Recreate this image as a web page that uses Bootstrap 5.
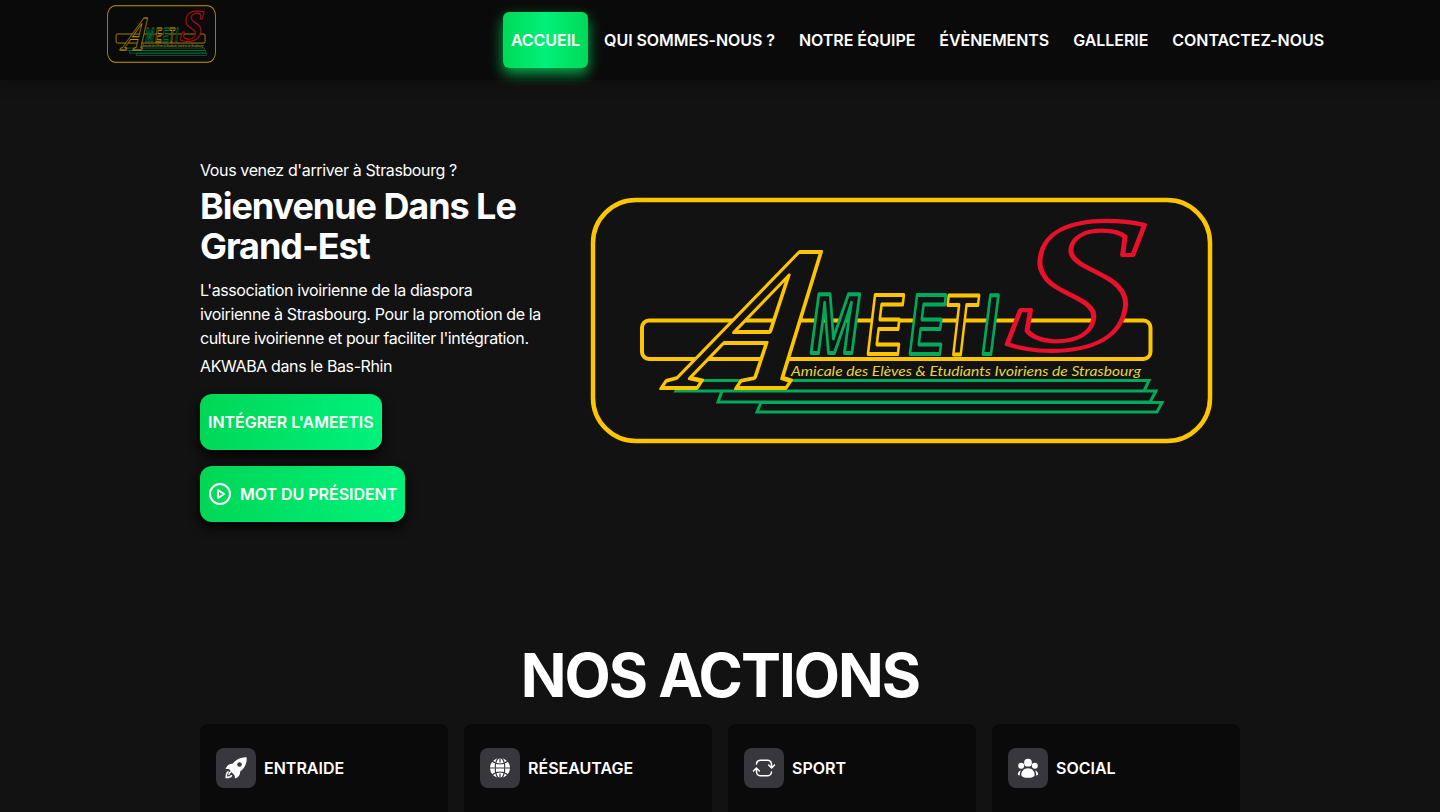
<!DOCTYPE html>
<html lang="fr">
<head>
<meta charset="utf-8">
<meta name="viewport" content="width=device-width, initial-scale=1">
<title>AMEETIS</title>
<link href="https://cdn.jsdelivr.net/npm/bootstrap@5.3.0/dist/css/bootstrap.min.css" rel="stylesheet">
<style>
body{background:#121212;color:#fff;font-family:Inter,sans-serif;font-size:16px;line-height:24px;overflow-x:hidden}
.site-nav{height:80px;background:#0a0a0a;box-shadow:0 4px 12px rgba(10,10,10,.35);padding:0 108px 0 107px;--logo-bg:#0a0a0a}
.brand-logo{width:109px;height:58px;margin-top:5px;opacity:.76}
.nav-item-link{height:56px;padding:0 8px;color:#fff;font-weight:600;letter-spacing:-.05px;text-decoration:none;border-radius:6px;white-space:nowrap}
.nav-item-link.active{background:linear-gradient(90deg,#00d957,#00f07a 50%,#00d957);box-shadow:0 6px 14px rgba(0,225,100,.75)}
.page-width{width:1040px}
.hero{padding-top:78px;height:570px;--logo-bg:#121212}
.hero-copy{width:345px}
.hero-copy p{letter-spacing:-.38px}
.hero-title{font-size:36px;line-height:40px;font-weight:700;letter-spacing:-1.06px;margin:4px 0 12px}
.hero-logo{width:623px;height:247px;margin:39px 0 0 45px}
.cta{height:56px;padding:0 8px;border-radius:12px;color:#fff;font-weight:600;letter-spacing:-.03px;text-decoration:none;background:linear-gradient(100deg,#00d655,#00f27d);box-shadow:0 5px 12px #000}
.section-title{font-size:60px;line-height:60px;font-weight:700;letter-spacing:-2px;margin:-5px 0 19px}
.action{height:88px;background:#0a0a0a;border-radius:8px 8px 0 0;padding:24px 16px;font-weight:600}
.action-icon{width:40px;height:40px;border-radius:8px;background:#37373d}
.logo-letter{fill:var(--logo-bg);stroke-linejoin:round}
.brush{font-family:"Liberation Serif",serif;font-weight:700;font-style:italic}
.hand{font-family:"Liberation Sans",sans-serif;font-weight:700;font-style:italic;font-size:86px;stroke-width:4}
.y{stroke:#fdc500}.g{stroke:#00a95c}.r{stroke:#e8102a}
</style>
</head>
<body>
<svg class="d-none">
<symbol id="ameetis" viewBox="590 197 623 247" preserveAspectRatio="none">
  <rect class="y" x="593" y="200" width="617" height="241" rx="43" fill="none" stroke-width="4.5"/>
  <rect class="y" x="642" y="320.5" width="508.500" height="38.500" rx="7" fill="none" stroke-width="4"/>
  <path class="g" fill="none" stroke-width="3" d="M682 380.500H1149L1144 391H676ZM722 391H1156L1150 402H718ZM761 402.500H1162L1157 412H757Z"/>
  <text class="logo-letter brush y" transform="matrix(.92 0 -.5 1.02 671 388)" font-size="202" stroke-width="4">A</text>
  <g class="logo-letter hand">
    <text class="g" transform="matrix(.68 0 0 1 810 353)">M</text>
    <text class="y" transform="matrix(.62 0 0 1 867 354)">E</text>
    <text class="g" transform="matrix(.62 0 0 1 909 354)">E</text>
    <text class="y" transform="matrix(.6 0 0 1 944 354)">T</text>
    <text class="g" transform="matrix(.65 0 0 1 982 354)">I</text>
  </g>
  <text class="logo-letter brush r" transform="matrix(1.25 0 -.18 1.03 1002 349)" font-size="188" stroke-width="4">S</text>
  <text x="791" y="376" font-family="Lato,sans-serif" font-style="italic" font-weight="400" font-size="14" fill="#e5d53d" textLength="350" lengthAdjust="spacingAndGlyphs">Amicale des Elèves &amp; Etudiants Ivoiriens de Strasbourg</text>
</symbol>
</svg>

<nav class="site-nav d-flex justify-content-between align-items-start position-relative">
  <a href="#" class="d-block lh-1"><svg class="brand-logo" viewBox="0 0 109 58"><use href="#ameetis" width="109" height="58"/></svg></a>
  <div class="d-flex gap-2 h-100 align-items-center">
    <a href="#" class="nav-item-link active d-flex align-items-center">ACCUEIL</a>
    <a href="#" class="nav-item-link d-flex align-items-center">QUI SOMMES-NOUS ?</a>
    <a href="#" class="nav-item-link d-flex align-items-center">NOTRE ÉQUIPE</a>
    <a href="#" class="nav-item-link d-flex align-items-center">ÉVÈNEMENTS</a>
    <a href="#" class="nav-item-link d-flex align-items-center">GALLERIE</a>
    <a href="#" class="nav-item-link d-flex align-items-center">CONTACTEZ-NOUS</a>
  </div>
</nav>

<main class="page-width mx-auto">
  <section class="hero d-flex align-items-start">
    <div class="hero-copy flex-shrink-0">
      <p class="mb-0">Vous venez d'arriver à Strasbourg ?</p>
      <h1 class="hero-title">Bienvenue Dans Le Grand-Est</h1>
      <p class="mb-1">L'association ivoirienne de la diaspora ivoirienne à Strasbourg. Pour la promotion de la culture ivoirienne et pour faciliter l'intégration.</p>
      <p class="mb-3">AKWABA dans le Bas-Rhin</p>
      <div class="d-flex flex-column align-items-start gap-3">
        <a href="#" class="cta d-flex align-items-center">INTÉGRER L'AMEETIS</a>
        <a href="#" class="cta d-flex align-items-center gap-2">
          <svg width="24" height="24" viewBox="0 0 24 24" fill="none" stroke="#fff" stroke-width="2" stroke-linejoin="round"><circle cx="12" cy="12" r="10"/><path d="M10 8l6 4-6 4z"/></svg>MOT DU PRÉSIDENT</a>
      </div>
    </div>
    <svg class="hero-logo flex-shrink-0" viewBox="0 0 623 247"><use href="#ameetis" width="623" height="247"/></svg>
  </section>
  <section>
    <h2 class="section-title text-center">NOS ACTIONS</h2>
    <div class="row row-cols-4 gx-3">
      <div class="col"><div class="action"><div class="d-flex align-items-center gap-2"><span class="action-icon d-flex align-items-center justify-content-center">
        <svg width="24" height="24" viewBox="0 0 24 24"><path fill="#fff" fill-rule="evenodd" d="M22.700 1.400C17 1 12.200 3.200 8.500 7.800 5.700 7.700 3.400 9 1.800 12.200c-.3.600 0 1 .6.900l3-.1 5.500 5.600-.1 3c0 .7.500 1 1.100.7 3.100-1.600 4.400-3.900 4.300-6.800 4.600-3.500 6.800-8.300 6.500-14.100ZM15.500 6.200a2.300 2.300 0 1 1 0 4.600 2.300 2.300 0 0 1 0-4.600Z"/><path fill="#fff" d="M5 11.500l8 7.500-2 1-6-7Z"/><path d="M4 15.800c-1.300 1-1.800 2.900-1.800 5.700 2.600 0 4.400-.5 5.300-1.800M7 15.800c-1.300.4-1.900 1.300-2 2.700" fill="none" stroke="#fff" stroke-width="1.500" stroke-linecap="round"/></svg>
      </span>ENTRAIDE</div></div></div>
      <div class="col"><div class="action"><div class="d-flex align-items-center gap-2"><span class="action-icon d-flex align-items-center justify-content-center">
        <svg width="24" height="24" viewBox="0 0 24 24"><circle cx="12" cy="12" r="10" fill="#fff"/><path d="M12 1v5.500M12 17.500V23M1 12h5.500M17.500 12H23M4 5c4.500 4 11.500 4 16 0M4 19c4.500-4 11.500-4 16 0M7 12h10" fill="none" stroke="#37373d" stroke-width="1.200"/><ellipse cx="12" cy="12" rx="4.800" ry="10.700" fill="none" stroke="#37373d" stroke-width="1.200"/></svg>
      </span>RÉSEAUTAGE</div></div></div>
      <div class="col"><div class="action"><div class="d-flex align-items-center gap-2"><span class="action-icon d-flex align-items-center justify-content-center">
        <svg width="24" height="24" viewBox="0 0 24 24" fill="none" stroke="#fff" stroke-width="1.500" stroke-linecap="round" stroke-linejoin="round"><path d="M4.500 8c.2-2.300 1.400-3.500 3.600-3.700 2.600-.2 5.200-.2 7.800 0 2.300.2 3.400 1.400 3.600 3.700l.1 3.800M16.700 9l2.900 3 2.900-3M19.500 16c-.2 2.300-1.300 3.500-3.600 3.700-2.600.2-5.200.2-7.800 0-2.200-.2-3.400-1.400-3.600-3.700l-.1-3.800M7.300 15l-2.900-3-2.900 3"/></svg>
      </span>SPORT</div></div></div>
      <div class="col"><div class="action"><div class="d-flex align-items-center gap-2"><span class="action-icon d-flex align-items-center justify-content-center">
        <svg width="24" height="24" viewBox="0 0 24 24" fill="#fff"><circle cx="12" cy="6.700" r="3.900"/><circle cx="5.200" cy="9.700" r="3"/><circle cx="18.800" cy="9.700" r="3"/><path d="M12 12.200c4 0 6.700 2.900 6.700 6.700 0 1.600-3 2.900-6.700 2.900s-6.700-1.300-6.700-2.900c0-3.800 2.700-6.700 6.700-6.700ZM5 14.500c-2 .5-3.200 2-3.200 4.300.5.500 1.200.7 2 .7-.1-1.900.3-3.500 1.200-5ZM19 14.500c2 .5 3.200 2 3.200 4.300-.5.500-1.200.7-2 .7.100-1.900-.3-3.500-1.200-5Z"/></svg>
      </span>SOCIAL</div></div></div>
    </div>
  </section>
</main>
<script src="https://cdn.jsdelivr.net/npm/bootstrap@5.3.0/dist/js/bootstrap.bundle.min.js"></script>
</body>
</html>
